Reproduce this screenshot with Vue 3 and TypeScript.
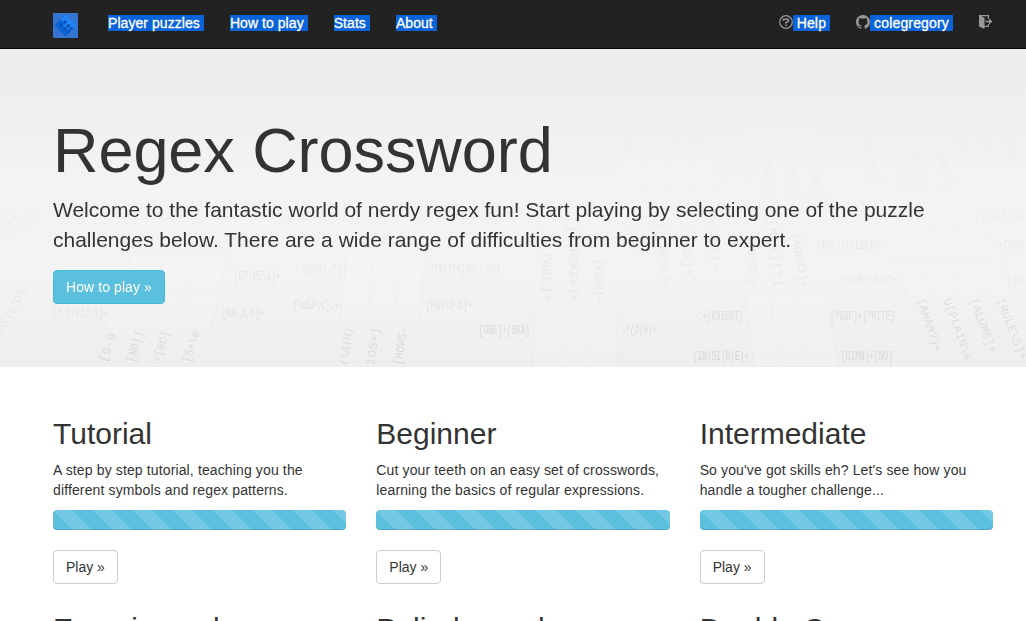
<script setup lang="ts">
interface Challenge {
  title: string
  lines: string[]
}

const links: string[] = ['Player puzzles', 'How to play', 'Stats', 'About']

const challenges: Challenge[] = [
  { title: 'Tutorial', lines: ['A step by step tutorial, teaching you the', 'different symbols and regex patterns.'] },
  { title: 'Beginner', lines: ['Cut your teeth on an easy set of crosswords,', 'learning the basics of regular expressions.'] },
  { title: 'Intermediate', lines: ["So you've got skills eh? Let's see how you", 'handle a tougher challenge...'] },
  { title: 'Experienced', lines: [] },
  { title: 'Palindromeda', lines: [] },
  { title: 'Double Cross', lines: [] },
]

interface Clue {
  t: string
  x: number
  y: number
  r: number
  w: number
  o: number
}

// Faint clues scattered over the banner: position, rotation, length and opacity.
const clues: Clue[] = [
  { t: '[*.27/1/\\S]+', x: 52, y: 261, r: 0, w: 56, o: 0.1 },
  { t: '[SP|NE\\s]+', x: 234, y: 224, r: 0, w: 46, o: 0.1 },
  { t: '[MA.X,S]+', x: 222, y: 261, r: 0, w: 42, o: 0.12 },
  { t: '(UXP|,?)+', x: 302, y: 217, r: 0, w: 45, o: 0.09 },
  { t: '[\\dSP\\s].+', x: 293, y: 253, r: 0, w: 46, o: 0.12 },
  { t: '.*[P|T]+[76/:.80]', x: 426, y: 217, r: 0, w: 74, o: 0.09 },
  { t: '[PA\\\\d\\d]+', x: 426, y: 253, r: 0, w: 46, o: 0.12 },
  { t: '[ONE]+[SKA]', x: 479, y: 278, r: 0, w: 51, o: 0.18 },
  { t: '.*(O|S)+', x: 621, y: 278, r: 0, w: 36, o: 0.18 },
  { t: '.+[KNIGHT]', x: 698, y: 264, r: 0, w: 45, o: 0.15 },
  { t: '(IN|SI|D|E)+', x: 693, y: 304, r: 0, w: 56, o: 0.19 },
  { t: '[^GDP]+[^MITE]', x: 830, y: 264, r: 0, w: 65, o: 0.15 },
  { t: '[DIMN]+[NO]', x: 841, y: 304, r: 0, w: 52, o: 0.18 },
  { t: '[RUIMP|URIU]+', x: 840, y: 228, r: 0, w: 57, o: 0.07 },
  { t: '[ANC]+[OLDER]+', x: 816, y: 193, r: 0, w: 69, o: 0.07 },
  { t: '+[DMS', x: 998, y: 193, r: 0, w: 26, o: 0.07 },
  { t: '[BU', x: 1007, y: 228, r: 0, w: 17, o: 0.07 },
  { t: '[VOICE|NO', x: 975, y: 163, r: 0, w: 49, o: 0.05 },
  { t: '[NAME]+', x: 720, y: 120, r: 0, w: 40, o: 0.03 },
  { t: '.*[TAKE]+', x: 545, y: 177, r: 89, w: 76, o: 0.08 },
  { t: '[T|HEKEA]+', x: 572, y: 177, r: 89, w: 76, o: 0.08 },
  { t: '[RUSH]+', x: 598, y: 210, r: 89, w: 43, o: 0.09 },
  { t: '.*[ABC]+', x: 632, y: 170, r: 85, w: 35, o: 0.05 },
  { t: '[(CHE\\s]+', x: 659, y: 174, r: 85, w: 66, o: 0.07 },
  { t: '.*[SA]+', x: 683, y: 168, r: 85, w: 60, o: 0.06 },
  { t: '[\\LET]+', x: 709, y: 160, r: 84, w: 63, o: 0.06 },
  { t: '+[N(ST)]+', x: 750, y: 190, r: 88, w: 50, o: 0.08 },
  { t: '[NEV]|T]', x: 771, y: 170, r: 84, w: 68, o: 0.08 },
  { t: '[AOHNT]+', x: 794, y: 184, r: 79, w: 56, o: 0.09 },
  { t: '[AHAM?)+', x: 920, y: 250, r: 72, w: 56, o: 0.15 },
  { t: 'U[PLAIN\\s', x: 946, y: 250, r: 70, w: 65, o: 0.15 },
  { t: '[ALUME]+', x: 973, y: 250, r: 70, w: 57, o: 0.15 },
  { t: '[RULE\\S]+', x: 999, y: 250, r: 68, w: 65, o: 0.15 },
  { t: '[S-9', x: 104, y: 313, r: 288, w: 30, o: 0.16 },
  { t: '[NO|]', x: 131, y: 313, r: 288, w: 32, o: 0.16 },
  { t: '+[BC]', x: 157, y: 313, r: 288, w: 32, o: 0.15 },
  { t: '[S+\\e', x: 187, y: 313, r: 288, w: 32, o: 0.16 },
  { t: '(\\A|H)', x: 344, y: 316, r: 279, w: 38, o: 0.15 },
  { t: '1OS+]', x: 371, y: 316, r: 279, w: 38, o: 0.15 },
  { t: '[HOWS-', x: 399, y: 316, r: 278, w: 38, o: 0.16 },
  { t: '/\\([U|O]/', x: 0, y: 286, r: 298, w: 56, o: 0.09 },
  { t: '[CA]', x: 3, y: 184, r: 300, w: 22, o: 0.05 },
  { t: '[ES]', x: 25, y: 182, r: 300, w: 22, o: 0.04 },
  { t: 'JLNE', x: 626, y: 70, r: 89, w: 33, o: 0.02 },
  { t: 'HILC', x: 649, y: 70, r: 89, w: 33, o: 0.02 },
  { t: 'IRIE', x: 671, y: 70, r: 89, w: 33, o: 0.02 },
  { t: 'LINE', x: 694, y: 70, r: 89, w: 33, o: 0.02 },
  { t: '[MASTE]', x: 766, y: 108, r: 83, w: 44, o: 0.04 },
  { t: '[INSTU]', x: 791, y: 108, r: 84, w: 44, o: 0.04 },
  { t: '[BLOCK]', x: 812, y: 108, r: 80, w: 44, o: 0.04 },
  { t: '[ALIMUL]', x: 866, y: 88, r: 78, w: 50, o: 0.035 },
  { t: '[BAG]', x: 899, y: 114, r: 80, w: 25, o: 0.035 },
  { t: '[MATGI]', x: 914, y: 97, r: 78, w: 42, o: 0.035 },
  { t: '[CHECK]', x: 938, y: 97, r: 74, w: 42, o: 0.035 },
  { t: '[NUE]+', x: 957, y: 86, r: 66, w: 34, o: 0.03 },
  { t: '[AC]+', x: 982, y: 86, r: 66, w: 28, o: 0.03 },
  { t: '[ENDE', x: 1003, y: 86, r: 66, w: 30, o: 0.03 },
]
</script>

<template>
  <div class="page">
    <nav class="navbar">
      <div class="container nav-row">
        <svg class="logo" width="25" height="25" viewBox="0 0 25 25">
          <rect width="25" height="25" fill="#3274d0" />
          <path d="M12.500 1.500 23.500 12.500 12.500 23.500 1.500 12.500Z" fill="#0b62d2" />
          <path d="M12.500 1.500 23.500 12.500 18.500 17.500 7.500 6.500Z" fill="#2285f6" />
          <g fill="#0752b4">
            <circle cx="12" cy="9" r="1.700" /><circle cx="8.300" cy="12.500" r="1.700" />
            <circle cx="15.500" cy="12.800" r="1.700" /><circle cx="11.800" cy="16" r="1.400" />
            <circle cx="18.500" cy="15.500" r="1.500" /><circle cx="15.500" cy="18.500" r="1.600" />
          </g>
          <path d="M10.500 11h3v3h-3zM14 15h2.500v2h-2.500z" fill="#1c79ea" />
        </svg>
        <a v-for="link in links" :key="link" class="nav-link"><span class="sel">{{ link }}</span></a>
        <div class="nav-right">
          <a class="nav-link">
            <svg class="icon" width="14" height="14" viewBox="0 0 14 14" fill="none" stroke="#999">
              <circle cx="7" cy="7" r="6.300" stroke-width="1.200" />
              <path d="M4.500 5.700V4.300h4.800v2L7 7.500v1.300M7 9.600v1.500" stroke-width="1.500" />
            </svg><span class="sel lead-gap">Help</span>
          </a>
          <a class="nav-link">
            <svg class="icon" width="14" height="14" viewBox="0 0 16 16" fill="#999">
              <path d="M8 0C3.580 0 0 3.580 0 8c0 3.540 2.290 6.530 5.470 7.590.4.070.55-.17.55-.38 0-.19-.01-.82-.01-1.490-2.010.37-2.530-.49-2.690-.94-.09-.23-.48-.94-.82-1.130-.28-.15-.68-.52-.01-.53.63-.01 1.080.58 1.230.82.72 1.210 1.870.87 2.330.66.07-.52.28-.87.51-1.070-1.780-.2-3.640-.89-3.640-3.950 0-.87.31-1.590.82-2.150-.08-.2-.36-1.020.08-2.120 0 0 .67-.21 2.200.82.64-.18 1.320-.27 2-.27s1.360.09 2 .27c1.530-1.040 2.200-.82 2.200-.82.44 1.100.16 1.920.08 2.120.51.56.82 1.270.82 2.150 0 3.070-1.870 3.750-3.650 3.950.29.25.54.73.54 1.480 0 1.070-.01 1.930-.01 2.200 0 .21.15.46.55.38A8.010 8.010 0 0 0 16 8c0-4.420-3.580-8-8-8Z" />
            </svg><span class="sel lead-gap">colegregory</span>
          </a>
          <a class="nav-link">
            <svg class="icon" width="14" height="14" viewBox="0 0 14 14" fill="#999">
              <path d="M0 0h10v4H8.800V1.200H2.500L5.500 3v7.800h3.300V9H10V12H5.500v2L0 11.500Z" />
              <path d="M6.500 5.800H10V3.500L13.500 6.500 10 9.500V7.200H6.500Z" />
            </svg>
          </a>
        </div>
      </div>
    </nav>

    <header class="jumbotron">
      <svg class="backdrop" width="1026" height="318" viewBox="0 0 1026 318" aria-hidden="true">
        <g fill="#fff" fill-opacity="0.13" stroke="#999" stroke-opacity="0.05">
          <path d="M535 259h82v60h-84zM562 259v59M589 259v59M534 299h83" />
          <path d="M744 246h80l15 72h-84zM770 246l9 72M797 246l13 72M749 284h83" />
          <path d="M348 196h78l-6 76h-80zM374 196l-7 76M402 196l-8 76M345 234h79" />
          <path d="M132 206h96l-17 74H104zM164 206l-24 74M196 206l-20 74M120 241h98" />
          <path d="M898 212h103l10 35H906zM923 212l10 35M949 212l11 35M975 212l11 35M902 229h104" />
          <path d="M884 180h98l8 27h-98zM908 180l8 27M933 180l8 27M958 180l8 27" stroke-opacity="0.02" />
          <path d="M620 108h91l3 28H618zM645 108v28M671 108v28M695 108v28" stroke-opacity="0.02" />
          <path d="M750 78h64v20h-64z" stroke-opacity="0.01" />
        </g>
        <g class="clues">
          <text
            v-for="(c, i) in clues"
            :key="i"
            :transform="`translate(${c.x} ${c.y}) rotate(${c.r})`"
            :textLength="c.w"
            :fill-opacity="c.o * 0.75"
            :y="c.r === 0 ? 4 : 0"
            dominant-baseline="central"
            lengthAdjust="spacingAndGlyphs"
          >{{ c.t }}</text>
        </g>
      </svg>
      <div class="container intro">
        <h1>Regex Crossword</h1>
        <p>Welcome to the fantastic world of nerdy regex fun! Start playing by selecting one of the puzzle<br />challenges below. There are a wide range of difficulties from beginner to expert.</p>
        <a class="btn btn-info">How to play »</a>
      </div>
    </header>

    <main class="container grid">
      <section v-for="c in challenges" :key="c.title" class="card">
        <h2>{{ c.title }}</h2>
        <template v-if="c.lines.length">
          <p><template v-for="(line, i) in c.lines" :key="i">{{ line }}<br v-if="i === 0" /></template></p>
          <div class="progress"></div>
          <a class="btn btn-default">Play »</a>
        </template>
      </section>
    </main>
  </div>
</template>

<style>
body {
  margin: 0;
  overflow: hidden;
}
</style>

<style scoped>
.page {
  height: 621px;
  overflow: hidden;
  background: #fff;
  color: #333;
  font: 14px/20px "Liberation Sans", Arial, sans-serif;
}
.page * {
  box-sizing: border-box;
}
.container {
  width: 970px;
  margin-left: 38px;
  padding: 0 15px;
}
.navbar {
  height: 49px;
  background: #222;
  border-bottom: 1px solid #080808;
}
.nav-row {
  display: flex;
  padding-top: 13px;
}
.logo {
  margin-right: 30px;
}
.nav-link {
  display: flex;
  height: 20px;
  margin-right: 30px;
  color: #fff;
  letter-spacing: 0.06px;
  white-space: nowrap;
}
.sel {
  height: 16px;
  margin: 2px -4px 0 0;
  padding-right: 4px;
  background: #0a63d8;
  line-height: 16px;
  -webkit-text-stroke: 0.3px #fff;
}
.lead-gap {
  padding-left: 4px;
}
.icon {
  margin-top: 2px;
}
.nav-right {
  display: flex;
  margin-left: auto;
}
.nav-right .nav-link {
  letter-spacing: 0.16px;
}
.nav-right .nav-link:last-child {
  margin-right: 0;
}
.jumbotron {
  position: relative;
  height: 318px;
  padding-top: 67px;
  overflow: hidden;
  background: linear-gradient(#ececec, #f3f3f3 40%, #f3f3f3 72%, #eee);
}
.backdrop {
  position: absolute;
  top: 0;
  left: 0;
}
.clues {
  font: 12px "Liberation Mono", monospace;
  fill: #444;
  filter: blur(0.6px);
}
.intro {
  position: relative;
}
h1,
h2,
p {
  margin: 0;
  font-weight: 400;
}
h1 {
  margin-bottom: 10px;
  font-size: 63px;
  letter-spacing: -0.07px;
  line-height: 69px;
}
.intro p {
  margin-bottom: 15px;
  font-size: 21px;
  line-height: 30px;
  white-space: nowrap;
}
.btn {
  display: block;
  width: fit-content;
  height: 34px;
  padding: 6px 12px;
  border: 1px solid #ccc;
  border-radius: 4px;
  white-space: nowrap;
}
.btn-info {
  border-color: #46b8da;
  background: #5bc0de;
  color: #fff;
  letter-spacing: 0.08px;
}
.btn-default {
  background: #fff;
  color: #333;
}
.grid {
  display: grid;
  grid-template-columns: repeat(3, 1fr);
  column-gap: 30px;
  row-gap: 28px;
  padding-top: 50px;
}
.card {
  min-width: 0;
}
h2 {
  margin-bottom: 10px;
  font-size: 30px;
  line-height: 33px;
}
.card p {
  margin-bottom: 10px;
  letter-spacing: 0.13px;
  white-space: nowrap;
}
.progress {
  height: 20px;
  margin-bottom: 20px;
  border-radius: 4px;
  background: linear-gradient(45deg, rgba(255, 255, 255, 0.15) 25%, transparent 25%, transparent 50%, rgba(255, 255, 255, 0.15) 50%, rgba(255, 255, 255, 0.15) 75%, transparent 75%) 0 0 / 40px 40px #5bc0de;
  box-shadow: inset 0 -1px 0 rgba(0, 0, 0, 0.15);
}
</style>
